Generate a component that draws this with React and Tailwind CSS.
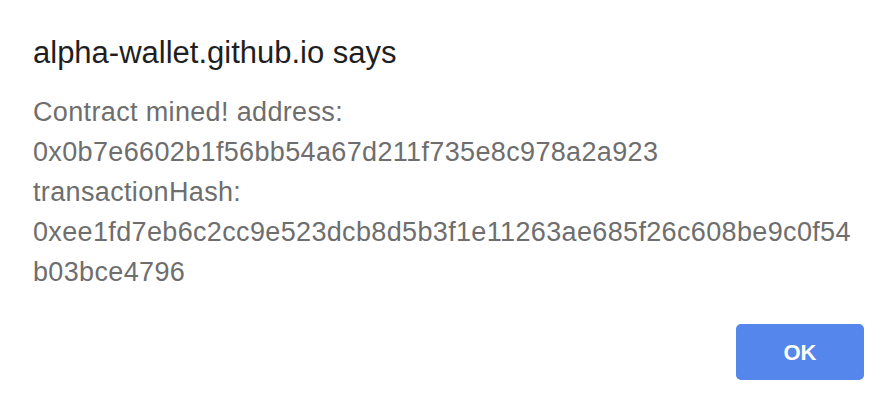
export default function App() {
  return (
    <div
      className="w-[896px] h-[412px] bg-white flex flex-col pl-[33px] pr-[32px]"
      style={{ fontFamily: '"Liberation Sans", Arial, sans-serif' }}
    >
      <div className="pt-[35px] text-[31px] leading-[36px] text-[#1f1f1f]">
        alpha-wallet.github.io says
      </div>
      <div className="mt-[21px] text-[27px] leading-[40px] tracking-[0.35px] text-[#6e6e6e]">
        <div>Contract mined! address:</div>
        <div>0x0b7e6602b1f56bb54a67d211f735e8c978a2a923</div>
        <div>transactionHash:</div>
        <div>0xee1fd7eb6c2cc9e523dcb8d5b3f1e11263ae685f26c608be9c0f54</div>
        <div>b03bce4796</div>
      </div>
      <div className="mt-[32px] flex justify-end">
        <button className="w-[128px] h-[56px] rounded-[5px] bg-[#5586ec] text-white text-[22px] font-bold">
          OK
        </button>
      </div>
    </div>
  );
}
